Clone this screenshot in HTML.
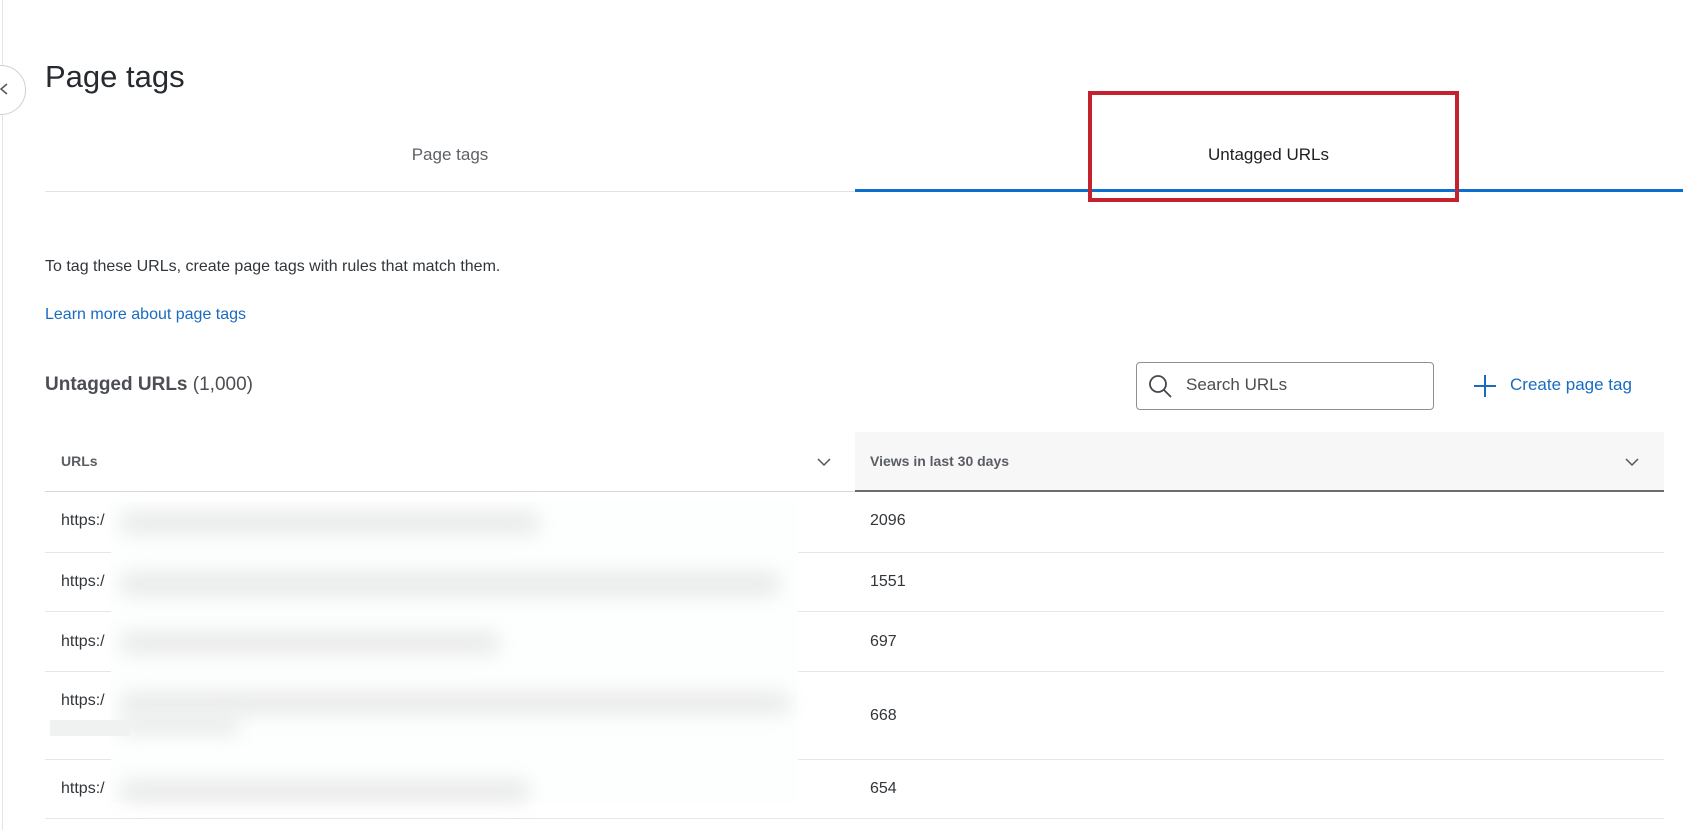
<!DOCTYPE html>
<html><head><meta charset="utf-8"><style>
*{margin:0;padding:0;box-sizing:border-box}
body{width:1700px;height:830px;background:#fff;font-family:"Liberation Sans",sans-serif;position:relative;overflow:hidden;color:#32363a}
.a{position:absolute}
.blur{position:absolute;background:#e9eaea;border-radius:14px;filter:blur(9px)}
</style></head><body>
<div class="a" style="left:2px;top:0;width:1px;height:830px;background:#e4e4e4"></div>
<div class="a" style="left:-24px;top:65px;width:50px;height:50px;border:1px solid #d0d0d0;border-radius:50%;background:#fff"></div>
<svg class="a" style="left:0;top:82px" width="10" height="14"><path d="M7 2 L1 7 L7 12" stroke="#555" stroke-width="1.5" fill="none"/></svg>
<div class="a" style="left:45px;top:59px;font-size:31px;color:#262a2f">Page tags</div>

<div class="a" style="left:45px;top:145px;width:810px;text-align:center;font-size:17px;color:#5e6165">Page tags</div>
<div class="a" style="left:855px;top:145px;width:827px;text-align:center;font-size:17px;color:#1d1f22">Untagged URLs</div>
<div class="a" style="left:45px;top:191px;width:810px;height:1px;background:#e2e2e2"></div>
<div class="a" style="left:855px;top:189px;width:828px;height:3px;background:#0b6ed0"></div>
<div class="a" style="left:1088px;top:91px;width:371px;height:111px;border:4px solid #c4222f"></div>

<div class="a" style="left:45px;top:258px;font-size:16px;color:#32363a">To tag these URLs, create page tags with rules that match them.</div>
<div class="a" style="left:45px;top:306px;font-size:16px;color:#1a6bc0">Learn more about page tags</div>
<div class="a" style="left:45px;top:374px;font-size:19px;color:#4b4f54"><b>Untagged URLs</b> (1,000)</div>

<div class="a" style="left:1136px;top:362px;width:298px;height:48px;border:1px solid #8d9094;border-radius:4px"></div>
<svg class="a" style="left:1148px;top:374px" width="26" height="26"><circle cx="10" cy="10" r="8" stroke="#44484c" stroke-width="1.8" fill="none"/><path d="M16 16 L23 23" stroke="#44484c" stroke-width="1.8"/></svg>
<div class="a" style="left:1186px;top:375px;font-size:17px;color:#4a4d51">Search URLs</div>
<svg class="a" style="left:1473px;top:374px" width="24" height="24"><path d="M12 1 V23 M1 12 H23" stroke="#1a6bc0" stroke-width="2"/></svg>
<div class="a" style="left:1510px;top:375px;font-size:17px;color:#1a6bc0">Create page tag</div>

<div class="a" style="left:855px;top:432px;width:809px;height:60px;background:#f7f7f7"></div>
<div class="a" style="left:45px;top:491px;width:810px;height:1px;background:#d8d8d8"></div>
<div class="a" style="left:855px;top:490px;width:809px;height:2px;background:#6a6d70"></div>
<div class="a" style="left:61px;top:453px;font-size:14px;font-weight:bold;color:#5a5e63">URLs</div>
<div class="a" style="left:870px;top:453px;font-size:14px;font-weight:bold;color:#5a5e63">Views in last 30 days</div>
<svg class="a" style="left:816px;top:456px" width="16" height="12"><path d="M2 3 L8 9 L14 3" stroke="#555" stroke-width="1.5" fill="none"/></svg>
<svg class="a" style="left:1624px;top:456px" width="16" height="12"><path d="M2 3 L8 9 L14 3" stroke="#555" stroke-width="1.5" fill="none"/></svg>

<div class="a" style="left:45px;top:552px;width:1619px;height:1px;background:#e6e6e6"></div>
<div class="a" style="left:45px;top:611px;width:1619px;height:1px;background:#e6e6e6"></div>
<div class="a" style="left:45px;top:671px;width:1619px;height:1px;background:#e6e6e6"></div>
<div class="a" style="left:45px;top:759px;width:1619px;height:1px;background:#e6e6e6"></div>
<div class="a" style="left:45px;top:818px;width:1619px;height:1px;background:#e6e6e6"></div>

<div class="a" style="left:61px;top:512px;font-size:16px">https:/</div>
<div class="a" style="left:61px;top:573px;font-size:16px">https:/</div>
<div class="a" style="left:61px;top:633px;font-size:16px">https:/</div>
<div class="a" style="left:61px;top:692px;font-size:16px">https:/</div>
<div class="a" style="left:61px;top:780px;font-size:16px">https:/</div>
<div class="a" style="left:870px;top:512px;font-size:16px">2096</div>
<div class="a" style="left:870px;top:573px;font-size:16px">1551</div>
<div class="a" style="left:870px;top:633px;font-size:16px">697</div>
<div class="a" style="left:870px;top:707px;font-size:16px">668</div>
<div class="a" style="left:870px;top:780px;font-size:16px">654</div>

<div class="a" style="left:111px;top:502px;width:687px;height:300px;background:#fdfefe"></div>
<div class="blur" style="left:120px;top:512px;width:420px;height:22px"></div>
<div class="blur" style="left:120px;top:572px;width:660px;height:24px"></div>
<div class="blur" style="left:120px;top:632px;width:380px;height:22px"></div>
<div class="blur" style="left:120px;top:692px;width:670px;height:22px"></div>
<div class="blur" style="left:120px;top:716px;width:120px;height:18px"></div>
<div class="blur" style="left:120px;top:780px;width:410px;height:22px"></div>
<div class="a" style="left:50px;top:720px;width:80px;height:16px;background:#f0f1f1"></div>
</body></html>
